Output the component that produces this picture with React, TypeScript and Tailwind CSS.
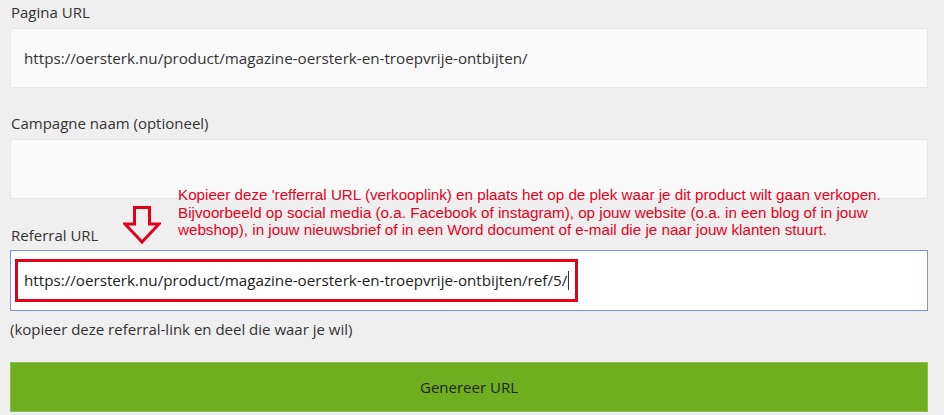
import React from 'react'

const font = { fontFamily: '"Open Sans", "Noto Sans", sans-serif' }

function Field({ label, value }: { label: string; value?: string }) {
  return (
    <div>
      <div className="text-[15px] leading-[20px] text-[#333] pl-[1px]">{label}</div>
      <div className="mt-[6px] h-[60px] flex items-center px-[13px] text-[15.2px] text-[#333] bg-[#f9f9f9] border border-[#e6e6e6] rounded-[2px]">
        {value}
      </div>
    </div>
  )
}

export default function App() {
  return (
    <div className="relative w-[944px] h-[415px] bg-[#efefef] overflow-hidden" style={font}>
      <div className="flex flex-col px-[10px] pt-[2px] w-[938px]">
        <Field label="Pagina URL" value="https://oersterk.nu/product/magazine-oersterk-en-troepvrije-ontbijten/" />
        <div className="h-[25px]" />
        <Field label="Campagne naam (optioneel)" />
        <div className="h-[26px]" />
        <div>
          <div className="text-[15px] leading-[20px] text-[#333] pl-[1px]">Referral URL</div>
          <div className="mt-[5px] h-[61px] bg-white border border-[#7f92e0] flex items-center pl-[4px]">
            <div className="h-[43px] border-[3px] border-[#e2001a] flex items-center pl-[6px] pr-[6px] text-[15.2px] text-[#222]">
              https://oersterk.nu/product/magazine-oersterk-en-troepvrije-ontbijten/ref/5/
              <span className="inline-block w-px h-[19px] bg-[#333] ml-[1px]" />
            </div>
          </div>
        </div>
        <div className="mt-[8px] text-[15px] leading-[20px] text-[#333]">
          (kopieer deze referral-link en deel die waar je wil)
        </div>
        <button className="mt-[23px] h-[50px] w-full bg-[#6faf1f] border border-[#8cbf52] text-[15px] text-[#222]">
          Genereer URL
        </button>
      </div>

      {/* annotation */}
      <div
        className="absolute left-[178px] top-[186px] text-[15.2px] leading-[17.5px] text-[#e8001c]"
        style={{ fontFamily: '"Liberation Sans", Arial, sans-serif' }}
      >
        <div>Kopieer deze 'refferral URL (verkooplink) en plaats het op de plek waar je dit product wilt gaan verkopen.</div>
        <div>Bijvoorbeeld op social media (o.a. Facebook of instagram), op jouw website (o.a. in een blog of in jouw</div>
        <div>webshop), in jouw nieuwsbrief of in een Word document of e-mail die je naar jouw klanten stuurt.</div>
      </div>
      <svg className="absolute left-[123px] top-[206px]" width="38" height="38" viewBox="0 0 38 38">
        <path d="M11.5 1.5 H26.5 V18 H36 L19 36 L2 18 H11.5 Z" fill="none" stroke="#e2001a" strokeWidth="3" strokeLinejoin="miter" />
      </svg>
    </div>
  )
}
